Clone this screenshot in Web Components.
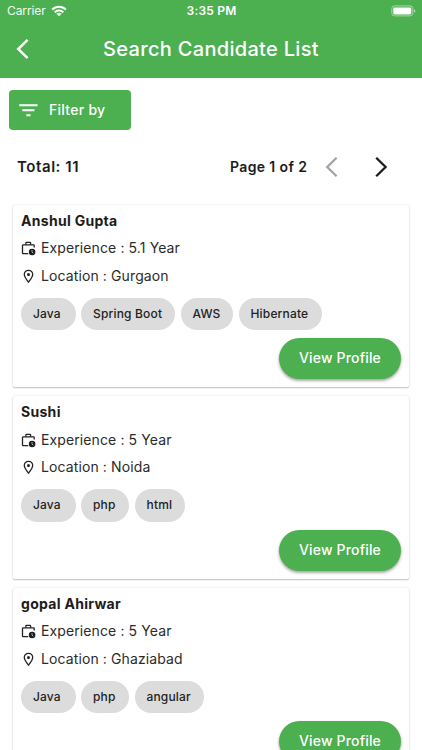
<!DOCTYPE html>
<html lang="en"><head><meta charset="utf-8"><title>Search Candidate List</title>
<style>
html,body{margin:0;height:750px;overflow:hidden;background:#fff}
body{font-family:Inter,"Liberation Sans",sans-serif;color:#202020}
</style></head><body>
<candidate-app></candidate-app>
<script>
function define(name, html){
  const t=document.createElement('template'); t.innerHTML=html;
  customElements.define(name, class extends HTMLElement{
    constructor(){super();this.attachShadow({mode:'open'}).append(t.content.cloneNode(true));}
  });
}

define('status-bar', `<style>
:host{display:grid;grid-template-columns:1fr auto 1fr;align-items:center;height:22px;padding:0 6px 0 7px;color:#fff;font-size:12px;line-height:22px}
.l{display:flex;align-items:center;gap:5px}.c{letter-spacing:-.1px;opacity:.95}
.t{font-weight:600;letter-spacing:.2px}
.b{justify-self:end;display:block;margin-top:-1px}svg{display:block}
.w{margin-top:-1px}
</style>
<div class="l"><span class="c">Carrier</span><svg class="w" width="16" height="12" viewBox="0 0 16 12" fill="none" stroke="#fff" stroke-width="2.1"><path d="M1.2 4.6C5 .8 11 .8 14.8 4.6"/><path d="M3.7 7.3C6.2 4.9 9.8 4.9 12.3 7.3"/><path d="M8 11.2 5.4 8.7Q8 6.8 10.6 8.7Z" fill="#fff" stroke="none"/></svg></div>
<span class="t">3:35 PM</span>
<svg class="b" width="25" height="12" viewBox="0 0 25 12"><rect x=".8" y=".9" width="21" height="10" rx="2.8" fill="none" stroke="#fff" stroke-opacity=".5"/><rect x="2.3" y="2.4" width="18" height="7" rx="1.4" fill="#fff"/><path d="M23 4.2q1.4.5 1.4 1.8t-1.4 1.8z" fill="#fff" fill-opacity=".6"/></svg>`);

define('title-bar', `<style>
:host{display:grid;grid-template-columns:48px 1fr 48px;align-items:center;height:54px;color:#fff}
h1{margin:0;font-size:20px;font-weight:450;line-height:28px;letter-spacing:.31px;text-align:center}
svg{display:block;margin-left:15px}
</style><svg width="16" height="22" viewBox="0 0 16 22" fill="none" stroke="#fff" stroke-width="2.5"><path d="M12.6 1.8 3.2 11l9.4 9.2"/></svg><h1><slot></slot></h1>`);

define('filter-button', `<style>
:host{display:flex;align-items:center;box-sizing:border-box;width:122px;height:40.5px;margin:12.4px 0 0 8.5px;padding-left:10.5px;gap:11px;border-radius:4px;background:#4caf50;color:#fff;font-size:14px;font-weight:450;line-height:20px;letter-spacing:.27px}
</style><svg width="19" height="14" viewBox="0 0 19 14" fill="#fff"><path d="M.2 1.2h18.3v2.1H.2zM3.3 6.2h12.1v2.1H3.3zM7.3 11.2h4.2v2.1H7.3z"/></svg><slot></slot>`);

define('result-pager', `<style>
:host{display:flex;align-items:center;height:72.5px;margin-bottom:1.6px;padding:0 33px 0 17px;font-weight:600;color:#1c1c1c;line-height:20px}
.t{font-size:15px;letter-spacing:.57px;flex:1}.p{font-size:14px;letter-spacing:.38px}
svg{display:block;fill:none;stroke-width:2.3}.a{margin-left:16.7px;stroke:#a3a3a3}.n{margin-left:33px;stroke:#1c1c1c}
</style><span class="t"><slot name="total"></slot></span><span class="p"><slot name="page"></slot></span>
<svg class="a" width="16" height="22" viewBox="0 0 16 22"><path d="M12.6 1.8 3.2 11l9.4 9.2"/></svg>
<svg class="n" width="16" height="22" viewBox="0 0 16 22"><path d="m3.2 1.8 9.4 9.2-9.4 9.2"/></svg>`);

define('skill-chip', `<style>
:host{display:block;box-sizing:border-box;height:32.5px;padding:0 12px;border-radius:17px;background:#dcdcdc;color:#222;font-size:12px;font-weight:500;line-height:32.5px;letter-spacing:.17px;white-space:nowrap}
</style><slot></slot>`);

define('profile-button', `<style>
:host{display:block;width:122px;height:41px;border-radius:21px;background:#4caf50;color:#fff;text-align:center;font-size:14px;font-weight:450;line-height:40px;letter-spacing:.17px;box-shadow:0 2px 3px rgba(0,0,0,.28),0 1px 3px rgba(0,0,0,.12)}
</style><slot></slot>`);

define('candidate-card', `<style>
:host{display:block;box-sizing:border-box;height:182.5px;padding:5px 8px 0;border-radius:1.5px;background:#fff;box-shadow:0 1px 1.5px rgba(0,0,0,.22),0 0 1.5px rgba(0,0,0,.2)}
.name{font-size:14px;font-weight:650;line-height:21px;height:21px;letter-spacing:.3px;color:#1c1c1c}
.row{display:flex;align-items:center;gap:5px;height:27.5px;font-size:14px;line-height:20px;letter-spacing:.11px;color:#2b2b2b}
.row.first{margin-top:3.9px}svg{display:block;width:15px;height:16px;flex:none}
.chips{display:flex;gap:5.5px;margin-top:8.3px}
.go{display:flex;justify-content:flex-end;margin-top:8.2px}
</style>
<div class="name"><slot name="name"></slot></div>
<div class="row first"><svg viewBox="0 0 15 16"><g fill="none" stroke="#222" stroke-width="1.3"><path d="M7.2 13.7H2.2q-.7 0-.7-.7V5.5q0-.7.7-.7h10.3q.7 0 .7.7v2"/><path d="M4.9 4.8V3q0-.6.6-.6h3.5q.6 0 .6.6v1.8"/></g><circle cx="11.1" cy="12" r="3.3" fill="#1c1c1c"/><path d="M11 10.1v2l1.3 1.1" fill="none" stroke="#fff" stroke-width=".65"/></svg><slot name="experience"></slot></div>
<div class="row"><svg viewBox="0 0 15 16"><path d="M7.5 14.2C5.2 11.3 3.3 8.9 3.3 6.5a4.2 4.2 0 0 1 8.4 0c0 2.4-1.9 4.8-4.2 7.7Z" fill="none" stroke="#222" stroke-width="1.3"/><circle cx="7.5" cy="6.4" r="1.5" fill="#222"/></svg><slot name="location"></slot></div>
<div class="chips"><slot name="skills"></slot></div>
<div class="go"><profile-button>View Profile</profile-button></div>`);

const people=[
 ['Anshul Gupta','5.1 Year','Gurgaon',['Java','Spring Boot','AWS','Hibernate'],[54.5,94,52.5,83.5]],
 ['Sushi','5 Year','Noida',['Java','php','html'],[54.5,48,50.5]],
 ['gopal Ahirwar','5 Year','Ghaziabad',['Java','php','angular'],[54.5,48,69]]];

define('candidate-app', `<style>
:host{display:block;height:750px;overflow:hidden;background:#fff}
header{background:#4caf50;height:77.6px}
.list{display:flex;flex-direction:column;gap:9px;padding:0 13px}
</style>
<header><status-bar></status-bar><title-bar>Search Candidate List</title-bar></header>
<filter-button>Filter by</filter-button>
<result-pager><span slot="total">Total: 11</span><span slot="page">Page 1 of 2</span></result-pager>
<div class="list">${people.map(([n,e,l,s,w])=>`<candidate-card><span slot="name">${n}</span><span slot="experience">Experience : ${e}</span><span slot="location">Location : ${l}</span>${s.map((k,i)=>`<skill-chip slot="skills" style="width:${w[i]}px">${k}</skill-chip>`).join('')}</candidate-card>`).join('')}</div>`);
</script></body></html>
